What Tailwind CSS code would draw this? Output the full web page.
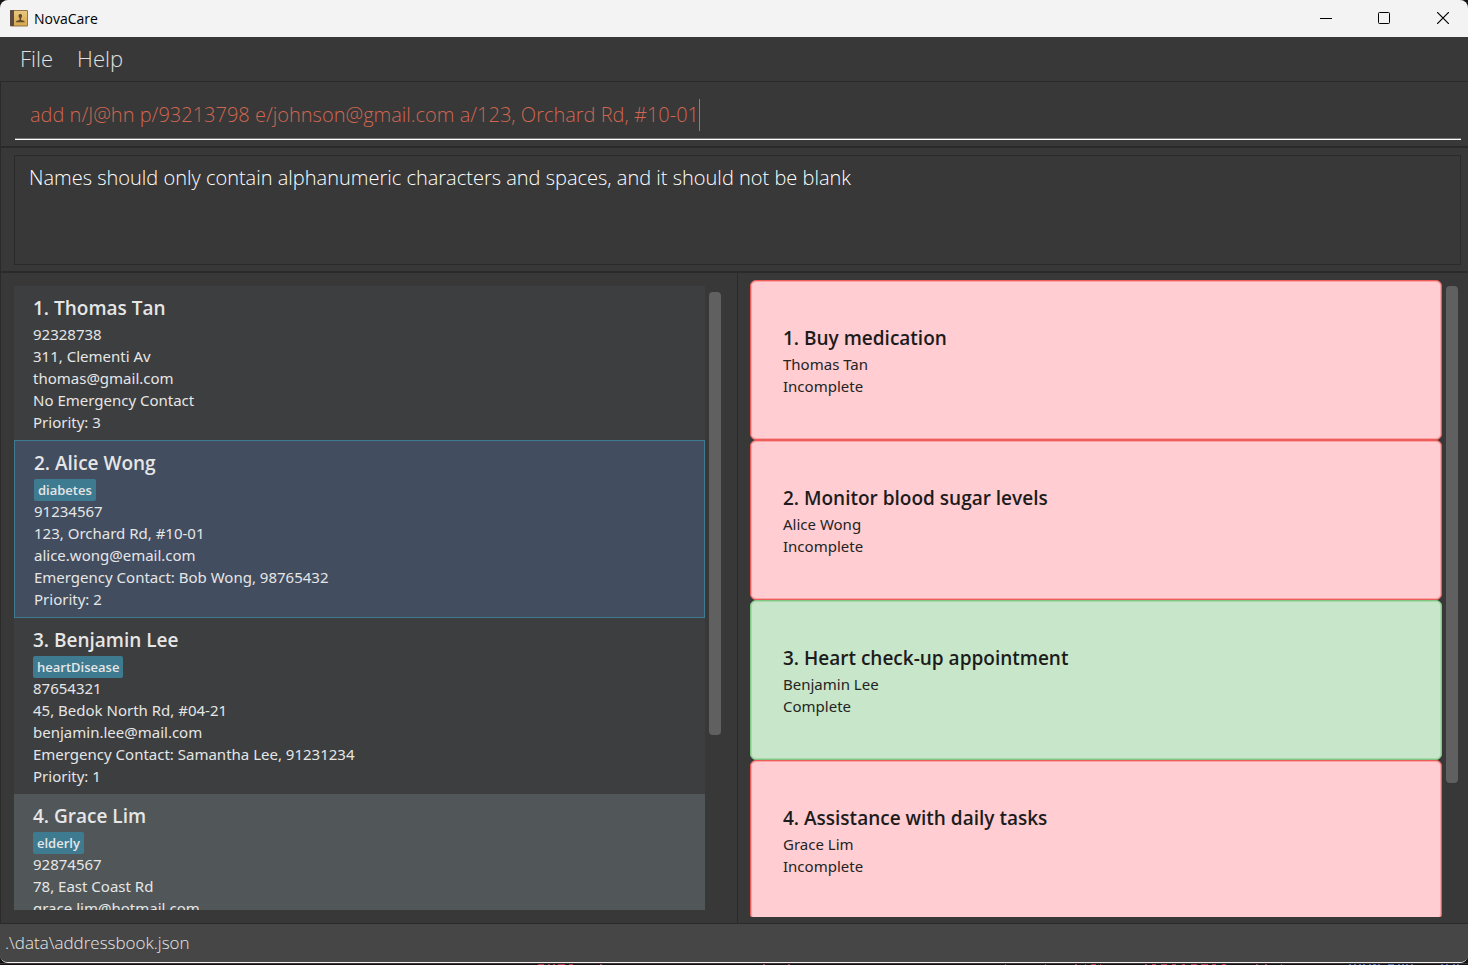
<!DOCTYPE html>
<html lang="en">
<head>
<meta charset="utf-8">
<title>NovaCare</title>
<script src="https://cdn.jsdelivr.net/npm/@tailwindcss/browser@4"></script>
</head>
<body class="bg-[#141214] font-['Open_Sans',sans-serif]">
<div class="flex h-screen flex-col overflow-hidden">
  <div class="flex min-h-0 flex-1 flex-col overflow-hidden rounded-t-lg rounded-b-lg border-b border-[#f4f4f4] bg-[#383838]">
    <header class="flex h-[37px] shrink-0 items-center bg-[#f3f3f3] pl-[10px] text-black">
      <svg class="mr-[6px] size-[18px]" viewBox="0 0 18 18" aria-hidden="true">
        <defs><linearGradient id="cover" x1="0" y1="0" x2="0" y2="1"><stop offset="0" stop-color="#e9c77f"/><stop offset="1" stop-color="#d9a64c"/></linearGradient></defs>
        <rect x="0" y="0" width="18" height="16.500" rx="1" fill="#94744a"/>
        <rect x="0" y="0" width="4" height="16" rx="1" fill="#5b4a42"/>
        <rect x="4" y="1" width="13" height="14.500" fill="url(#cover)"/>
        <path d="M10.300 4c1.200 0 1.800.8 1.800 2 0 .9-.4 1.600-1 2.100V10l3.400 1v1.300H6.200V11l3.300-1V8.100c-.6-.5-1-1.200-1-2.100 0-1.200.6-2 1.800-2z" fill="#5d4a2c"/>
      </svg>
      <h1 class="flex-1 text-[14px] font-normal">NovaCare</h1>
      <button aria-label="Minimize" class="flex h-full w-[58px] items-center justify-center"><svg class="size-3" viewBox="0 0 12 12"><path d="M0 5.500h12" stroke="#000" /></svg></button>
      <button aria-label="Maximize" class="flex h-full w-[58px] items-center justify-center pb-px"><svg class="size-3" viewBox="0 0 12 12"><rect x=".5" y=".5" width="11" height="11" rx="1" fill="none" stroke="#000"/></svg></button>
      <button aria-label="Close" class="flex h-full w-[55px] items-center justify-center pr-1 pb-px"><svg class="ml-2 size-3" viewBox="0 0 12 12"><path d="M0 0l12 12M12 0L0 12" stroke="#000" stroke-width="1.200"/></svg></button>
    </header>

    <nav class="flex h-11 shrink-0 items-center gap-6 pb-[2px] pl-5 text-[22px] font-light text-[#e0e0e0]">
      <button>File</button>
      <button>Help</button>
    </nav>

    <section class="h-[65px] shrink-0 border-t border-l border-[#2a2a2a] pt-[10px] pr-[7px] pl-[14px]">
      <div class="flex h-12 items-center border-b border-white pb-px pl-[15px] shadow-[inset_0_-1px_0_#777]">
        <input aria-label="Command" class="[field-sizing:content] bg-transparent text-[20px] font-light text-[#d06651] outline-none" value="add n/J@hn p/93213798 e/johnson@gmail.com a/123, Orchard Rd, #10-01">
        <span class="h-8 w-px bg-[#d06651]"></span>
      </div>
    </section>

    <section class="h-[125px] shrink-0 border-t-2 border-l border-[#2a2a2a] pt-[7px] pr-[7px] pl-[13px]">
      <div role="status" class="h-[110px] border border-[#2a2a2a] pt-[7px] pl-[14px] text-[20px] leading-[30px] font-light text-white">Names should only contain alphanumeric characters and spaces, and it should not be blank</div>
    </section>

    <main class="flex min-h-0 flex-1 border-t-2 border-[#2a2a2a] text-[15px] leading-[22px]">
      <section aria-label="Patients" class="flex basis-[738px] grow border-x border-[#2a2a2a] pt-[13px] pr-4 pb-[13px] pl-[13px] font-['Noto_Sans',sans-serif] text-[#e6e6e6]">
        <ol class="min-w-0 flex-1 overflow-hidden">
          <li class="bg-[#3c3e3f] px-[19px] pt-[9px] pb-[7px]">
            <h2 class="mb-px font-['Open_Sans',sans-serif] text-[19px] leading-[27px] font-semibold">1. Thomas Tan</h2>
            <p>92328738</p><p>311, Clementi Av</p><p>thomas@gmail.com</p><p>No Emergency Contact</p><p>Priority: 3</p>
          </li>
          <li class="border border-[#3e7b91] bg-[#424d5f] px-[19px] pt-[9px] pb-[7px]">
            <h2 class="font-['Open_Sans',sans-serif] text-[19px] leading-[27px] font-semibold">2. Alice Wong</h2>
            <span class="mt-[2px] -mb-px block w-fit rounded-xs bg-[#3e7b91] px-1 font-['Open_Sans',sans-serif] text-[13px] font-semibold">diabetes</span>
            <p>91234567</p><p>123, Orchard Rd, #10-01</p><p>alice.wong@email.com</p><p>Emergency Contact: Bob Wong, 98765432</p><p>Priority: 2</p>
          </li>
          <li class="bg-[#3c3e3f] px-[19px] pt-[9px] pb-[7px]">
            <h2 class="font-['Open_Sans',sans-serif] text-[19px] leading-[27px] font-semibold">3. Benjamin Lee</h2>
            <span class="mt-[2px] -mb-px block w-fit rounded-xs bg-[#3e7b91] px-1 font-['Open_Sans',sans-serif] text-[13px] font-semibold">heartDisease</span>
            <p>87654321</p><p>45, Bedok North Rd, #04-21</p><p>benjamin.lee@mail.com</p><p>Emergency Contact: Samantha Lee, 91231234</p><p>Priority: 1</p>
          </li>
          <li class="bg-[#515658] px-[19px] pt-[9px] pb-[7px]">
            <h2 class="font-['Open_Sans',sans-serif] text-[19px] leading-[27px] font-semibold">4. Grace Lim</h2>
            <span class="mt-[2px] -mb-px block w-fit rounded-xs bg-[#3e7b91] px-1 font-['Open_Sans',sans-serif] text-[13px] font-semibold">elderly</span>
            <p>92874567</p><p>78, East Coast Rd</p><p>grace.lim@hotmail.com</p>
          </li>
        </ol>
        <div class="ml-1 pt-[6px]"><div class="h-[443px] w-3 rounded-sm bg-[#606060]"></div></div>
      </section>

      <section aria-label="Tasks" class="flex basis-[730px] grow pt-[7px] pr-[10px] pb-[6px] pl-3 font-['Noto_Sans',sans-serif] text-[#242424]">
        <ol class="min-w-0 flex-1 overflow-hidden">
          <li class="h-40 rounded-md border border-[#ef5b59] bg-[#ffcdd2] px-8 pt-[44px] shadow-[inset_0_0_0_1px_#f8a3a5]">
            <h2 class="mb-px font-['Open_Sans',sans-serif] text-[19px] leading-[27px] font-semibold text-[#1c1c1c]">1. Buy medication</h2><p>Thomas Tan</p><p>Incomplete</p>
          </li>
          <li class="h-40 rounded-md border border-[#ef5b59] bg-[#ffcdd2] px-8 pt-[44px] shadow-[inset_0_0_0_1px_#f8a3a5]">
            <h2 class="mb-px font-['Open_Sans',sans-serif] text-[19px] leading-[27px] font-semibold text-[#1c1c1c]">2. Monitor blood sugar levels</h2><p>Alice Wong</p><p>Incomplete</p>
          </li>
          <li class="h-40 rounded-md border border-[#81c784] bg-[#c8e6c9] px-8 pt-[44px] shadow-[inset_0_0_0_1px_#a9d9ab]">
            <h2 class="mb-px font-['Open_Sans',sans-serif] text-[19px] leading-[27px] font-semibold text-[#1c1c1c]">3. Heart check-up appointment</h2><p>Benjamin Lee</p><p>Complete</p>
          </li>
          <li class="h-40 rounded-md border border-[#ef5b59] bg-[#ffcdd2] px-8 pt-[44px] shadow-[inset_0_0_0_1px_#f8a3a5]">
            <h2 class="mb-px font-['Open_Sans',sans-serif] text-[19px] leading-[27px] font-semibold text-[#1c1c1c]">4. Assistance with daily tasks</h2><p>Grace Lim</p><p>Incomplete</p>
          </li>
        </ol>
        <div class="ml-1 pt-[6px]"><div class="h-[497px] w-3 rounded-sm bg-[#606060]"></div></div>
      </section>
    </main>

    <footer class="flex h-[39px] shrink-0 items-center border-t border-[#2a2a2a] bg-[#464646] pl-[5px] text-[17px] font-light text-[#e6e6e6]">.\data\addressbook.json</footer>
  </div>
  <!-- sliver of the desktop visible under the window -->
  <svg class="h-[2px] w-full shrink-0" viewBox="0 0 1468 2" preserveAspectRatio="none" aria-hidden="true">
    <path d="M0 .5h1468" stroke="#3a3638"/>
    <path d="M538 1.500h6m4 0h2m3 0h2m3 0h7m4 0h4m27 0h2m161 0h2m23 0h2m215 0h1m39 0h1m29 0h2m8 0h1m5 0h5m4 0h1m44 0h2m5 0h4m5 0h6m5 0h4m6 0h3m6 0h6m4 0h7m4 0h4m6 0h4m30 0h2m7 0h2m14 0h1" stroke="#b83245"/>
    <path d="M1349 1.500h2m3 0h2m3 0h2m2 0h2m4 0h2m2 0h3m2 0h2m8 0h6m4 0h2m2 0h2m2 0h2m3 0h2m28 0h2m3 0h2m5 0h2m2 0h2" stroke="#4868b0"/>
  </svg>
</div>
</body>
</html>
